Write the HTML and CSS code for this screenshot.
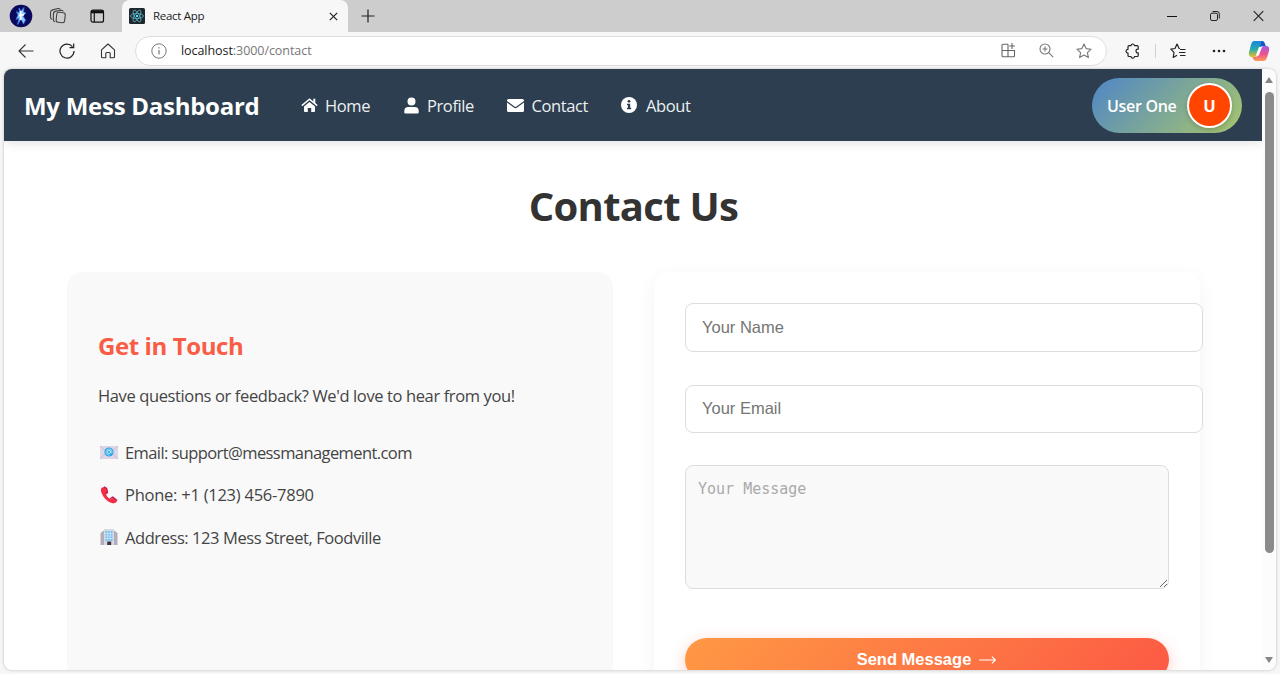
FILE: index.html
```html
<!DOCTYPE html>
<html lang="en">
<head>
<meta charset="utf-8">
<title>React App</title>
<link rel="stylesheet" href="styles.css">
</head>
<body>
<div class="browser">
  <div class="tabstrip">
    <div class="strip-tools">
      <svg class="avatar" width="24" height="24" viewBox="0 0 24 24"><circle cx="12" cy="12" r="11.3" fill="#0b0a5c"/><path d="M10 4L12 7 15 3.500 14.500 8 17 9 14 12 16.500 16 14.500 20 12 15 8.500 20.500 10 14 7 15.500 9 11 7.500 7.500 10.500 9Z" fill="#8fd0ff" stroke="#3c78e0" stroke-width=".8"/><path d="M11.500 7l.5 9M10 11.500l5-.7" stroke="#fff" stroke-width="1.600"/></svg>
      <svg class="workspaces" width="18" height="18" viewBox="0 0 18 18" fill="none" stroke="#444" stroke-width="1.1"><rect x="7.500" y="5.500" width="8.500" height="10" rx="2" transform="rotate(6 12 10)"/><path d="M6 14.800Q4.300 14.500 4.400 12.500V7Q4.500 4.300 7 4.100L12.500 3.300Q14 3.300 14.200 4.500M3.300 12.500Q1.500 12 1.500 10V5.500Q1.600 3.400 3.600 2.900L9 1.500Q10.700 1.300 11.300 2.500"/></svg>
      <svg class="tab-actions" width="15" height="15" viewBox="0 0 15 15" fill="none" stroke="#111" stroke-width="1.2"><rect x="1" y="1.2" width="12.5" height="12" rx="2"/><path d="M1 2.900h12.500" stroke-width="2.800"/><path d="M4.300 4v9"/></svg>
    </div>
    <div class="tab">
      <svg class="favicon" width="16" height="16" viewBox="0 0 16 16"><rect width="16" height="16" rx="1.5" fill="#20262b"/><g fill="none" stroke="#55b7cc" stroke-width=".8"><ellipse cx="8" cy="8" rx="6.5" ry="2.5"/><ellipse cx="8" cy="8" rx="6.5" ry="2.5" transform="rotate(60 8 8)"/><ellipse cx="8" cy="8" rx="6.5" ry="2.5" transform="rotate(120 8 8)"/></g><circle cx="8" cy="8" r="1.3" fill="#6ad8ee"/></svg>
      <span class="tab-title">React App</span>
      <svg class="tab-close" width="9" height="9" viewBox="0 0 9 9"><path d="M.8.8l7.4 7.4M8.2.8L.8 8.2" stroke="#222" stroke-width="1.2"/></svg>
    </div>
    <svg class="new-tab" width="14" height="14" viewBox="0 0 14 14"><path d="M7 .5v13M.5 7h13" stroke="#222" stroke-width="1.2"/></svg>
    <div class="window-controls">
      <svg width="10" height="12" viewBox="0 0 10 12"><path d="M0 6.5h10" stroke="#111"/></svg>
      <svg width="10" height="12" viewBox="0 0 10 12" fill="none" stroke="#222"><rect x=".5" y="3.2" width="7" height="7.3" rx="1.5"/><path d="M2.5 1.5H7Q9.3 1.5 9.3 4v4.5"/></svg>
      <svg width="11" height="12" viewBox="0 0 11 12"><path d="M.7 1.2l9.6 9.6M10.3 1.2L.7 10.8" stroke="#222" stroke-width="1.1"/></svg>
    </div>
  </div>
  <div class="toolbar">
    <div class="nav-buttons">
      <svg width="16" height="16" viewBox="0 0 16 16" fill="none" stroke="#333" stroke-width="1.1"><path d="M15.5 8H1M7.5 1.5L1 8l6.500 6.500"/></svg>
      <svg width="16" height="16" viewBox="0 0 16 16" fill="none" stroke="#222" stroke-width="1.2"><path d="M15 8A7 7 0 1 1 13.500 3.700M14.700 .5v4.200h-4.200"/></svg>
      <svg width="16" height="16" viewBox="0 0 16 16" fill="none" stroke="#333" stroke-width="1.1" stroke-linejoin="round"><path d="M1.500 6.800L8 1l6.500 5.800V13.800Q14.500 14.800 13.500 14.800H10.200V10.500Q10.200 9.500 9.200 9.500H6.800Q5.800 9.500 5.800 10.500V14.800H2.500Q1.500 14.800 1.500 13.800Z"/></svg>
    </div>
    <div class="address">
      <svg class="site-info" width="16" height="16" viewBox="0 0 16 16" fill="none" stroke="#777"><circle cx="8" cy="8" r="7.200"/><path d="M8 7v4.500M8 4.300v1.300" stroke-width="1.200"/></svg>
      <span class="url"><b>localhost</b>:3000/contact</span>
      <div class="address-tools">
        <svg width="15" height="15" viewBox="0 0 15 15" fill="none" stroke="#666" stroke-width="1.100"><path d="M7 1.200H2Q1 1.200 1 2.200V12.800Q1 13.800 2 13.800H12.500Q13.500 13.800 13.500 12.800V7.500H1M7 1.200v12.600M11 0v6M8.300 3h5.700"/></svg>
        <svg width="15" height="15" viewBox="0 0 15 15" fill="none" stroke="#777" stroke-width="1.100"><circle cx="6" cy="6" r="5"/><path d="M9.700 9.700l4.500 4.500M6 3.500v5M3.500 6h5"/></svg>
        <svg width="16" height="16" viewBox="0 0 16 16" fill="none" stroke="#777" stroke-width="1.100" stroke-linejoin="round"><path d="M8 1l2.100 4.600 5 .6-3.700 3.400 1 5L8 12.100 3.600 14.600l1-5L.9 6.200l5-.6Z"/></svg>
      </div>
    </div>
    <div class="toolbar-right">
      <svg class="extensions" width="16" height="16" viewBox="0 0 16 16" fill="none" stroke="#222" stroke-width="1.200" stroke-linejoin="round"><path d="M4 2.700H6Q6.200 1 7.700 1T9.500 2.700H12.200Q13.200 2.700 13.200 3.700V6.200Q11 6 11 8T13.200 9.800V12.500Q13.200 13.500 12.200 13.500H9.500Q9.300 15.200 7.700 15.200T6 13.500H4Q3 13.500 3 12.500V10.200Q1 10 1 8.200T3 6.300V3.700Q3 2.700 4 2.700Z"/></svg>
      <i class="divider"></i>
      <svg class="favorites" width="16" height="16" viewBox="0 0 16 16" fill="none" stroke="#222" stroke-width="1.200" stroke-linejoin="round"><path d="M10 5.500L9 5.300 7 1 5 5.500 .8 6.200 4 9.400 3.200 14.500 7 12.300M10 6.500h5.500M9 9.500h6.500M10 12.500h5.500"/></svg>
      <svg class="more" width="14" height="4" viewBox="0 0 14 4" fill="#222"><circle cx="2" cy="2" r="1.300"/><circle cx="7" cy="2" r="1.300"/><circle cx="12" cy="2" r="1.300"/></svg>
      <svg class="copilot" width="22" height="22" viewBox="0 0 22 22">
        <defs>
          <linearGradient id="cool" x1="0" y1="0" x2="0" y2="1"><stop offset="0" stop-color="#1686df"/><stop offset=".5" stop-color="#26aab0"/><stop offset="1" stop-color="#e6c225"/></linearGradient>
          <linearGradient id="warm" x1="0" y1="0" x2="0" y2="1"><stop offset="0" stop-color="#a55ae4"/><stop offset=".55" stop-color="#ec558c"/><stop offset="1" stop-color="#ff9c54"/></linearGradient>
        </defs>
        <path d="M6 1h8q2 0 2.700 2l1 3h-3q-2 0-2.700 2L9 15q-.7 2-3 2H4Q0 17 1 12L3.200 4Q4 1 6 1Z" fill="url(#cool)"/>
        <path d="M13.500 1q2.200 0 2.900 2l1 3h-3q-1.400 0-2.200 1z" fill="#1955c4"/>
        <path d="M16 21H8q-2 0-2.700-2l-1-2h3q2 0 2.700-2L13 8q.7-2 3-2h2q4 0 3 5l-2.200 7Q18 21 16 21Z" fill="url(#warm)"/>
        <path d="M11 7h3l-3.200 8.500H7.800z" fill="#fff"/>
      </svg>
    </div>
  </div>
  <div class="viewport">
    <div class="page">
      <header class="navbar">
        <div class="brand">My Mess Dashboard</div>
        <nav class="links">
          <a class="link home"><svg width="17" height="16" viewBox="0 0 17 16" fill="#fff"><path d="M8.500 5L3 9.500v4.700q0 .8.800.8h3V11h3.400v4h3q.8 0 .8-.8V9.500z"/><path d="M.8 8.600L8.500 2.200l7.700 6.400" fill="none" stroke="#fff" stroke-width="1.400"/><path d="M12.300 1.800h2v4.700l-2-1.700z"/></svg><span>Home</span></a>
          <a class="link profile"><svg width="15" height="17" viewBox="0 0 15 17" fill="#fff"><circle cx="7.500" cy="4.500" r="4"/><path d="M.3 15.200V14Q.3 10 4.300 10h6.400q4 0 4 4v1.200q0 1.300-1.300 1.300H1.600Q.3 16.500.3 15.200z"/></svg><span>Profile</span></a>
          <a class="link contact"><svg width="17" height="13" viewBox="0 0 17 13" fill="#fff"><path d="M1.500 0h14Q17 0 17 1.500v.6L9.500 7.500q-1 .8-2 0L0 2.100v-.6Q0 0 1.500 0Z"/><path d="M0 3.600l6.800 5q1.700 1.200 3.400 0L17 3.600v7.900q0 1.500-1.500 1.500h-14Q0 13 0 11.500z"/></svg><span>Contact</span></a>
          <a class="link about"><svg width="16" height="16" viewBox="0 0 16 16"><circle cx="8" cy="8" r="8" fill="#fff"/><circle cx="8" cy="4.300" r="1.400" fill="#2c3e50"/><path d="M6 6.700h3.200v4h1v1.500H6v-1.500h1V8.200H6z" fill="#2c3e50"/></svg><span>About</span></a>
        </nav>
        <div class="user"><span class="user-name">User One</span><span class="user-badge">U</span></div>
      </header>
      <main class="content">
        <h1 class="title"><span>Contact Us</span></h1>
        <div class="columns">
          <section class="info">
            <h2 class="info-title"><span>Get in Touch</span></h2>
            <p class="lead"><span>Have questions or feedback? We'd love to hear from you!</span></p>
            <ul class="details">
              <li><svg width="22" height="18" viewBox="0 0 22 18"><path d="M2 3h18v13H2z" fill="#ded6e6"/><path d="M2 3l9 8 9-8M2 16l7-7M20 16l-7-7" fill="none" stroke="#c9bfd4"/><circle cx="11" cy="9" r="4.600" fill="#2da7e5"/><circle cx="11" cy="9" r="1.600" fill="none" stroke="#d9f4ff" stroke-width=".8"/><path d="M12.600 7.500v2q1.400 1 1.500-.8Q13.500 5.800 11 5.900T8 9t3.500 3" fill="none" stroke="#d9f4ff" stroke-width=".6"/></svg><span class="mail">Email: support@messmanagement.com</span></li>
              <li><svg width="22" height="18" viewBox="0 0 22 18"><path d="M5.500 1L3.500 2Q2 3.500 4 8q3 6.500 9 8.800 3.500 1.200 5-.3l1-1.800-3.800-3-2.800 1.500Q9 11.500 8 8.200L9.300 6.500 8.500 2z" fill="#f22f46"/><path d="M6 .8l2.700 1.700.8 3.900-1.700 1.300M12 12.700l2.800-1.700 4.300 3.500" fill="none" stroke="#c41b4f" stroke-width="1.300"/></svg><span class="tel">Phone: +1 (123) 456-7890</span></li>
              <li><svg width="22" height="18" viewBox="0 0 22 18"><path d="M2.500 5l4-3h9l4 3v12h-17z" fill="#b3adb9"/><path d="M6 1h10v16H6z" fill="#d5dae4"/><path d="M7.500 3h7v10h-7z" fill="#73bceb"/><path d="M7 5.500h8M7 8h8M7 10.500h8M9.700 3v10M12.300 3v10" stroke="#c7e6fa" stroke-width=".9"/><path d="M9.200 13.500h4V17h-4z" fill="#403340"/></svg><span class="place">Address: 123 Mess Street, Foodville</span></li>
            </ul>
          </section>
          <form class="form">
            <input class="field" type="text" placeholder="Your Name">
            <input class="field" type="email" placeholder="Your Email">
            <textarea class="message" placeholder="Your Message"></textarea>
            <button class="send" type="button">Send Message <svg width="18" height="9" viewBox="0 0 18 9"><path d="M0 5h16M13 1.700l3.300 3.300L13 8.300" fill="none" stroke="#fff" stroke-width="1.200"/></svg></button>
          </form>
        </div>
      </main>
    </div>
    <div class="scrollbar"><i class="arrow up"></i><i class="thumb"></i><i class="arrow down"></i></div>
  </div>
</div>
</body>
</html>
```
FILE: styles.css
```css
* { box-sizing: border-box; }
body { margin: 0; font-family: "Open Sans", "Noto Sans", sans-serif; background: #f6f6f6; overflow: hidden; }
svg { display: block; flex: none; }
.browser { width: 1280px; height: 674px; display: flex; flex-direction: column; background: #f6f6f6; }

/* Tab strip */
.tabstrip { height: 32px; flex: none; display: flex; align-items: center; background: #cdcdcd; }
.strip-tools { display: flex; align-items: center; width: 122px; height: 32px; padding-left: 9px; background: #cdcdcd; }
.workspaces { margin-left: 16px; }
.tab-actions { margin-left: 23px; }
.tab { display: flex; align-items: center; align-self: stretch; width: 226px; padding: 0 10px 0 7px; background: #f7f7f7; border-radius: 8px 8px 0 0; }
.tab-title { margin-left: 8px; padding-bottom: 1px; font-size: 11.5px; letter-spacing: -.3px; color: #1b1b1b; }
.tab-close { margin-left: auto; }
.new-tab { margin-left: 13px; }
.window-controls { display: flex; gap: 33px; margin-left: auto; padding-right: 16px; }

/* Toolbar */
.toolbar { height: 37px; flex: none; display: flex; align-items: center; background: #f7f7f7; }
.nav-buttons { display: flex; gap: 25px; width: 135px; padding-left: 18px; }
.address { display: flex; align-items: center; width: 972px; height: 30px; padding: 0 14px 0 15px; background: #fff; border: 1px solid #dedede; border-radius: 15px; }
.url { margin-left: 14px; font-size: 12.500px; letter-spacing: -.06px; color: #777; }
.url b { font-weight: 400; color: #1b1b1b; }
.address-tools { display: flex; gap: 22.500px; margin-left: auto; }
.toolbar-right { display: flex; align-items: center; flex: 1; padding-left: 18px; }
.divider { width: 1px; height: 14px; margin: 0 14px 0 14px; background: #d2d2d2; }
.more { margin-left: 26px; }
.copilot { margin-left: 22px; }

/* Page viewport */
.viewport { position: relative; display: flex; width: 1272px; height: 601px; margin-left: 4px; overflow: hidden; background: #fff; border-radius: 8px; box-shadow: 0 0 3px rgba(0, 0, 0, .25); }
.page { width: 1258px; height: 601px; overflow: hidden; }
.navbar { display: flex; align-items: center; height: 72px; padding: 0 20px; background: #2c3e50; color: #fff; box-shadow: 0 2px 10px rgba(0, 0, 0, .12); }
.brand { width: 277px; font-size: 24px; font-weight: 700; letter-spacing: -.27px; white-space: nowrap; }
.links { display: flex; align-items: center; }
.link { display: flex; align-items: center; gap: 8px; font-size: 16.500px; letter-spacing: -.4px; color: #ecf0f1; }
.link span { padding-top: 1px; white-space: nowrap; }
.home { width: 103px; gap: 7px; }
.profile { width: 103px; }
.contact { width: 114px; gap: 7.500px; }
.about { gap: 9px; }
.user { display: flex; align-items: center; justify-content: space-between; width: 150px; height: 55px; margin-left: auto; padding: 0 10px 0 15px; border-radius: 28px; background: linear-gradient(135deg, #4f86c6, #a8c66c); }
.user-name { padding-top: 2px; font-size: 16px; font-weight: 600; letter-spacing: -.3px; white-space: nowrap; }
.user-badge { display: flex; align-items: center; justify-content: center; width: 45px; height: 45px; border: 2px solid #fff; border-radius: 50%; background: #ff4500; font-size: 16.500px; font-weight: 700; box-shadow: 0 2px 5px rgba(0, 0, 0, .2); }

/* Contact page */
.content { padding: 37px 62px 0 63px; }
.title { margin: 0 0 38px; text-align: center; font-size: 40px; line-height: 56px; font-weight: 700; color: #333; }
.title span { letter-spacing: -.7px; }
.columns { display: grid; grid-template-columns: 546px 546px; gap: 41px; }
.info { height: 480px; padding: 57px 31px; border-radius: 15px; background: #f9f9f9; color: #444; }
.info-title { margin: 0 0 21px; font-size: 24px; line-height: 34px; font-weight: 700; letter-spacing: -.4px; color: #f95d46; }
.lead { margin: 0 0 32px; font-size: 16.500px; line-height: 24px; letter-spacing: -.38px; white-space: nowrap; }
.details { display: grid; gap: 18.500px; margin: 0; padding: 0; list-style: none; }
.details li { display: flex; align-items: center; gap: 5px; height: 24px; font-size: 16.500px; white-space: nowrap; }
.mail { letter-spacing: -.59px; }
.tel { letter-spacing: -.25px; }
.place { letter-spacing: -.43px; }
.form { height: 480px; padding: 31px; border-radius: 15px; background: #fff; box-shadow: 0 5px 20px rgba(0, 0, 0, .05); }
.field { display: block; width: 518px; height: 49px; margin-bottom: 33px; padding: 0 16px; border: 1px solid #ddd; border-radius: 8px; background: #fff; font: 16.500px "Liberation Sans", sans-serif; }
.field + .field { height: 48px; margin-bottom: 32px; padding-bottom: 1px; }
.field::placeholder { color: #757575; }
.message { display: block; width: 484px; height: 124px; padding: 14px 12px; border: 1px solid #ddd; border-radius: 8px; background: #f9f9f9; font: 15px "DejaVu Sans Mono", monospace; resize: vertical; }
.message::placeholder { color: #aaa; }
.send { display: flex; align-items: center; justify-content: center; gap: 8px; width: 484px; height: 43px; margin-top: 48.500px; padding: 0; border: 0; border-radius: 25px; background: linear-gradient(135deg, #ff9944, #fc5944); color: #fff; font: 700 16.500px "Liberation Sans", sans-serif; box-shadow: 0 4px 15px rgba(255, 94, 68, .3); }

/* Page scrollbar */
.scrollbar { display: flex; flex-direction: column; align-items: center; width: 14px; height: 601px; padding: 8px 0 7px; background: #fcfcfc; }
.arrow { width: 0; height: 0; border-left: 4.500px solid transparent; border-right: 4.500px solid transparent; }
.up { border-bottom: 6px solid #858585; }
.down { margin-top: auto; border-top: 6px solid #858585; }
.thumb { width: 9px; height: 461px; margin-top: 9px; border-radius: 5px; background: #8b8b8b; }
```
